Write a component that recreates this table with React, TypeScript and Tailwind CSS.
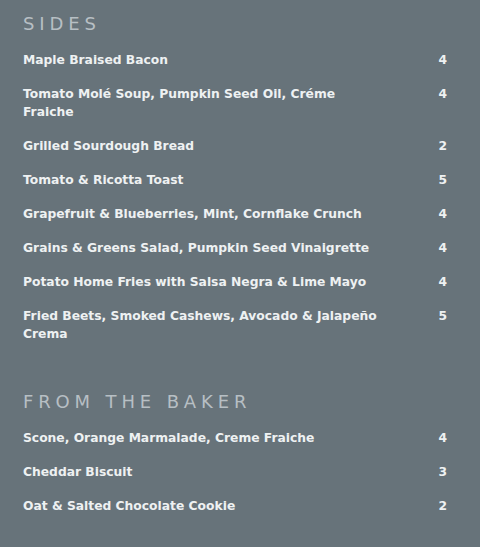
const sides = [
  { name: 'Maple Braised Bacon', price: 4 },
  { name: 'Tomato Molé Soup, Pumpkin Seed Oil, Créme Fraiche', price: 4 },
  { name: 'Grilled Sourdough Bread', price: 2 },
  { name: 'Tomato & Ricotta Toast', price: 5 },
  { name: 'Grapefruit & Blueberries, Mint, Cornflake Crunch', price: 4 },
  { name: 'Grains & Greens Salad, Pumpkin Seed Vinaigrette', price: 4 },
  { name: 'Potato Home Fries with Salsa Negra & Lime Mayo', price: 4 },
  { name: 'Fried Beets, Smoked Cashews, Avocado & Jalapeño Crema', price: 5 },
];

const baker = [
  { name: 'Scone, Orange Marmalade, Creme Fraiche', price: 4 },
  { name: 'Cheddar Biscuit', price: 3 },
  { name: 'Oat & Salted Chocolate Cookie', price: 2 },
];

function Section({ title, items }: { title: string; items: { name: string; price: number }[] }) {
  return (
    <section>
      <h2 className="text-[18px] leading-[24px] tracking-[0.27em] text-[#b7bfc4] font-normal">
        {title}
      </h2>
      <ul className="mt-[15px] flex flex-col gap-4">
        {items.map((item) => (
          <li key={item.name} className="flex justify-between gap-6 text-[12.3px] leading-[18px] font-bold text-[#eef1f2]">
            <span className="max-w-[356px]">{item.name}</span>
            <span>{item.price}</span>
          </li>
        ))}
      </ul>
    </section>
  );
}

export default function App() {
  return (
    <div
      className="w-[480px] h-[547px] bg-[#67737a] pl-[23px] pr-[33px] pt-3 flex flex-col gap-[47px]"
      style={{ fontFamily: '"DejaVu Sans", sans-serif' }}
    >
      <Section title="SIDES" items={sides} />
      <Section title="FROM THE BAKER" items={baker} />
    </div>
  );
}
